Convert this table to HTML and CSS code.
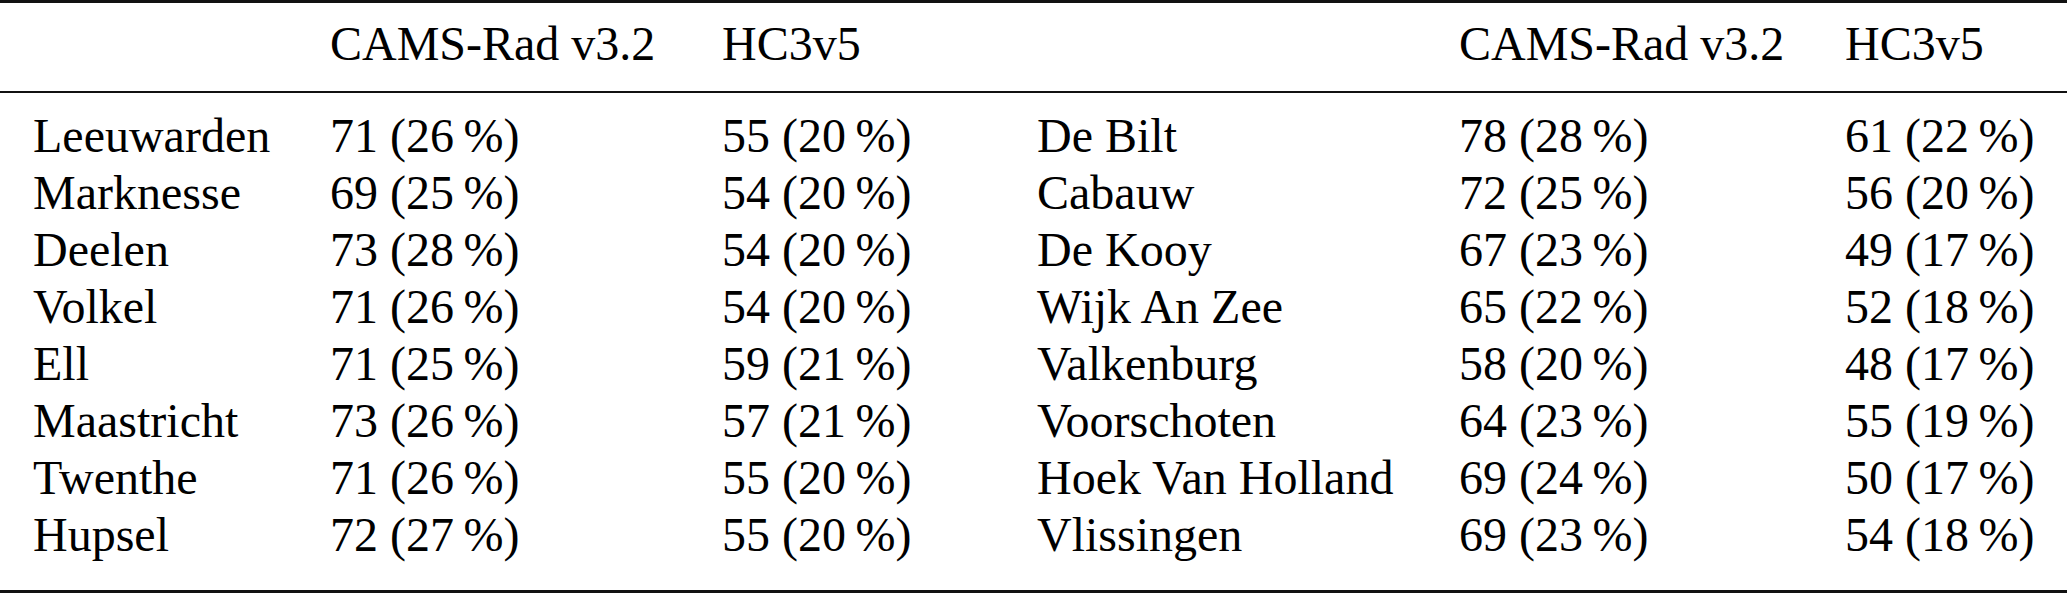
FILE: index.html
```html
<!doctype html>
<html lang="en">
  <head>
    <meta charset="UTF-8" />
    <meta name="viewport" content="width=device-width, initial-scale=1.0" />
    <title>CAMS-Rad v3.2 vs HC3v5</title>
    <link rel="stylesheet" href="styles.css">
  </head>
  <body>
    <table class="stations">
      <colgroup>
        <col class="c-name" />
        <col class="c-cams" />
        <col class="c-hc" />
        <col class="c-name2" />
        <col class="c-cams2" />
        <col class="c-hc2" />
      </colgroup>
      <thead>
        <tr>
          <th class="first"></th>
          <th>CAMS-Rad v3.2</th>
          <th>HC3v5</th>
          <th></th>
          <th>CAMS-Rad v3.2</th>
          <th>HC3v5</th>
        </tr>
      </thead>
      <tbody>
        <tr>
          <td class="first">Leeuwarden</td>
          <td>71 (26&thinsp;%)</td>
          <td>55 (20&thinsp;%)</td>
          <td>De Bilt</td>
          <td>78 (28&thinsp;%)</td>
          <td>61 (22&thinsp;%)</td>
        </tr>
        <tr>
          <td class="first">Marknesse</td>
          <td>69 (25&thinsp;%)</td>
          <td>54 (20&thinsp;%)</td>
          <td>Cabauw</td>
          <td>72 (25&thinsp;%)</td>
          <td>56 (20&thinsp;%)</td>
        </tr>
        <tr>
          <td class="first">Deelen</td>
          <td>73 (28&thinsp;%)</td>
          <td>54 (20&thinsp;%)</td>
          <td>De Kooy</td>
          <td>67 (23&thinsp;%)</td>
          <td>49 (17&thinsp;%)</td>
        </tr>
        <tr>
          <td class="first">Volkel</td>
          <td>71 (26&thinsp;%)</td>
          <td>54 (20&thinsp;%)</td>
          <td>Wijk An Zee</td>
          <td>65 (22&thinsp;%)</td>
          <td>52 (18&thinsp;%)</td>
        </tr>
        <tr>
          <td class="first">Ell</td>
          <td>71 (25&thinsp;%)</td>
          <td>59 (21&thinsp;%)</td>
          <td>Valkenburg</td>
          <td>58 (20&thinsp;%)</td>
          <td>48 (17&thinsp;%)</td>
        </tr>
        <tr>
          <td class="first">Maastricht</td>
          <td>73 (26&thinsp;%)</td>
          <td>57 (21&thinsp;%)</td>
          <td>Voorschoten</td>
          <td>64 (23&thinsp;%)</td>
          <td>55 (19&thinsp;%)</td>
        </tr>
        <tr>
          <td class="first">Twenthe</td>
          <td>71 (26&thinsp;%)</td>
          <td>55 (20&thinsp;%)</td>
          <td>Hoek Van Holland</td>
          <td>69 (24&thinsp;%)</td>
          <td>50 (17&thinsp;%)</td>
        </tr>
        <tr>
          <td class="first">Hupsel</td>
          <td>72 (27&thinsp;%)</td>
          <td>55 (20&thinsp;%)</td>
          <td>Vlissingen</td>
          <td>69 (23&thinsp;%)</td>
          <td>54 (18&thinsp;%)</td>
        </tr>
      </tbody>
    </table>
  </body>
</html>
```

FILE: styles.css
```css
* {
  margin: 0;
  padding: 0;
  box-sizing: border-box;
}

body {
  background-color: #ffffff;
  color: #000000;
  font-family: "Liberation Serif", "Times New Roman", serif;
  font-size: 48px;
  line-height: 57px;
}

.stations {
  width: 2067px;
  table-layout: fixed;
  border-collapse: separate;
  border-spacing: 0;
}

.c-name { width: 330px; }
.c-cams { width: 392px; }
.c-hc { width: 315px; }
.c-name2 { width: 422px; }
.c-cams2 { width: 386px; }
.c-hc2 { width: 222px; }

th,
td {
  text-align: left;
  font-weight: normal;
  white-space: nowrap;
  padding: 0;
  vertical-align: baseline;
}

.first {
  padding-left: 33px;
}

/* booktabs-like rules */
thead th {
  border-top: 3px solid #111;
  border-bottom: 2px solid #111;
  padding-top: 12px;
  padding-bottom: 19px;
  height: 93px;
}

tbody tr:first-child td {
  padding-top: 14px;
}

tbody tr:last-child td {
  border-bottom: 3px solid #111;
  padding-bottom: 27px;
}
```
